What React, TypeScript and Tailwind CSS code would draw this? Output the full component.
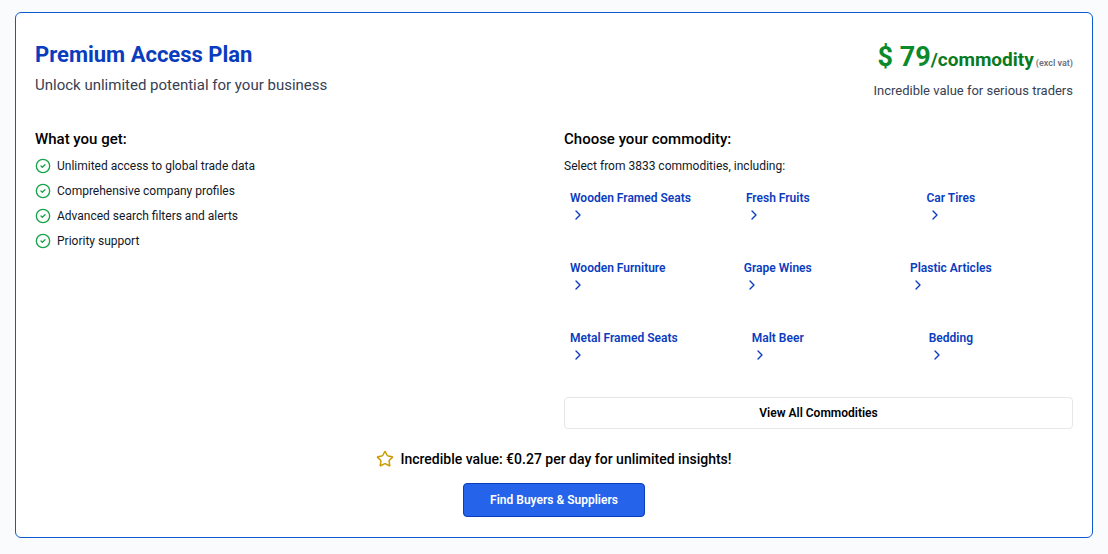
import React from 'react';
import { ChevronRight, CircleCheck, Star } from 'lucide-react';

const features = [
  'Unlimited access to global trade data',
  'Comprehensive company profiles',
  'Advanced search filters and alerts',
  'Priority support',
];

const commodities = [
  'Wooden Framed Seats',
  'Fresh Fruits',
  'Car Tires',
  'Wooden Furniture',
  'Grape Wines',
  'Plastic Articles',
  'Metal Framed Seats',
  'Malt Beer',
  'Bedding',
];

const PlanHeader: React.FC = () => (
  <div className="flex items-start justify-between">
    <div>
      <h1 className="text-[22px] leading-8 font-bold text-[#0a3cbe]">Premium Access Plan</h1>
      <p className="mt-0.5 text-[15px] leading-6 text-gray-700">Unlock unlimited potential for your business</p>
    </div>
    <div className="text-right">
      <div className="flex items-baseline justify-end leading-9 text-[#0a8a2a]">
        <span className="text-[27px] font-bold">$ 79</span>
        <span className="text-[19px] font-bold text-[#0a7a1e]">/commodity</span>
        <span className="ml-0.5 text-[9px] font-semibold text-gray-500">(excl vat)</span>
      </div>
      <p className="text-[13px] leading-5 text-gray-700">Incredible value for serious traders</p>
    </div>
  </div>
);

const FeatureList: React.FC = () => (
  <div>
    <h2 className="text-[15px] leading-[22px] font-medium text-black">What you get:</h2>
    <ul className="mt-2 flex flex-col gap-[9px]">
      {features.map(feature => (
        <li key={feature} className="flex items-center gap-1.5 text-xs text-gray-900">
          <CircleCheck className="h-4 w-4 text-[#16a34a]" />
          {feature}
        </li>
      ))}
    </ul>
  </div>
);

const CommodityPicker: React.FC = () => (
  <div>
    <h2 className="text-[15px] leading-[22px] font-medium text-black">Choose your commodity:</h2>
    <p className="mt-2 text-xs text-gray-900">Select from 3833 commodities, including:</p>
    <div className="mt-4 grid grid-cols-[26fr_32fr_36fr_6fr] gap-y-[37px]">
      {commodities.map((name, i) => (
        <a
          key={name}
          href="#"
          className={`flex text-xs font-semibold text-[#0a3cbe] ${
            i % 3 === 0 ? 'col-start-1 pl-1.5' : i % 3 === 1 ? 'col-start-2 justify-center' : 'col-start-3 justify-center'
          }`}
        >
          <span className="whitespace-nowrap">
            {name}
            <ChevronRight className="mt-px h-4 w-4" />
          </span>
        </a>
      ))}
    </div>
    <button className="mt-[34px] h-8 w-full rounded-sm border border-gray-200 bg-white text-xs font-semibold text-black">
      View All Commodities
    </button>
  </div>
);

const App: React.FC = () => {
  return (
    <div className="min-h-screen bg-[#f9fbfd] px-[15px] py-3 font-['Roboto',sans-serif]">
      <div className="rounded-md border border-[#0b5bd0] bg-white px-[19px] pt-[26px] pb-5">
        <PlanHeader />
        <div className="mt-[27px] grid grid-cols-2 gap-5">
          <FeatureList />
          <CommodityPicker />
        </div>
        <div className="mt-[18px] flex flex-col items-center">
          <div className="flex items-center gap-1.5 text-sm leading-6 font-medium text-black">
            <Star className="h-[18px] w-[18px] text-[#ca9a04]" />
            Incredible value: €0.27 per day for unlimited insights!
          </div>
          <button className="mt-3 h-[34px] rounded-sm border border-[#0a3cbe] bg-[#2563eb] px-[26px] text-xs font-semibold text-white">
            Find Buyers &amp; Suppliers
          </button>
        </div>
      </div>
    </div>
  );
};

export default App;
